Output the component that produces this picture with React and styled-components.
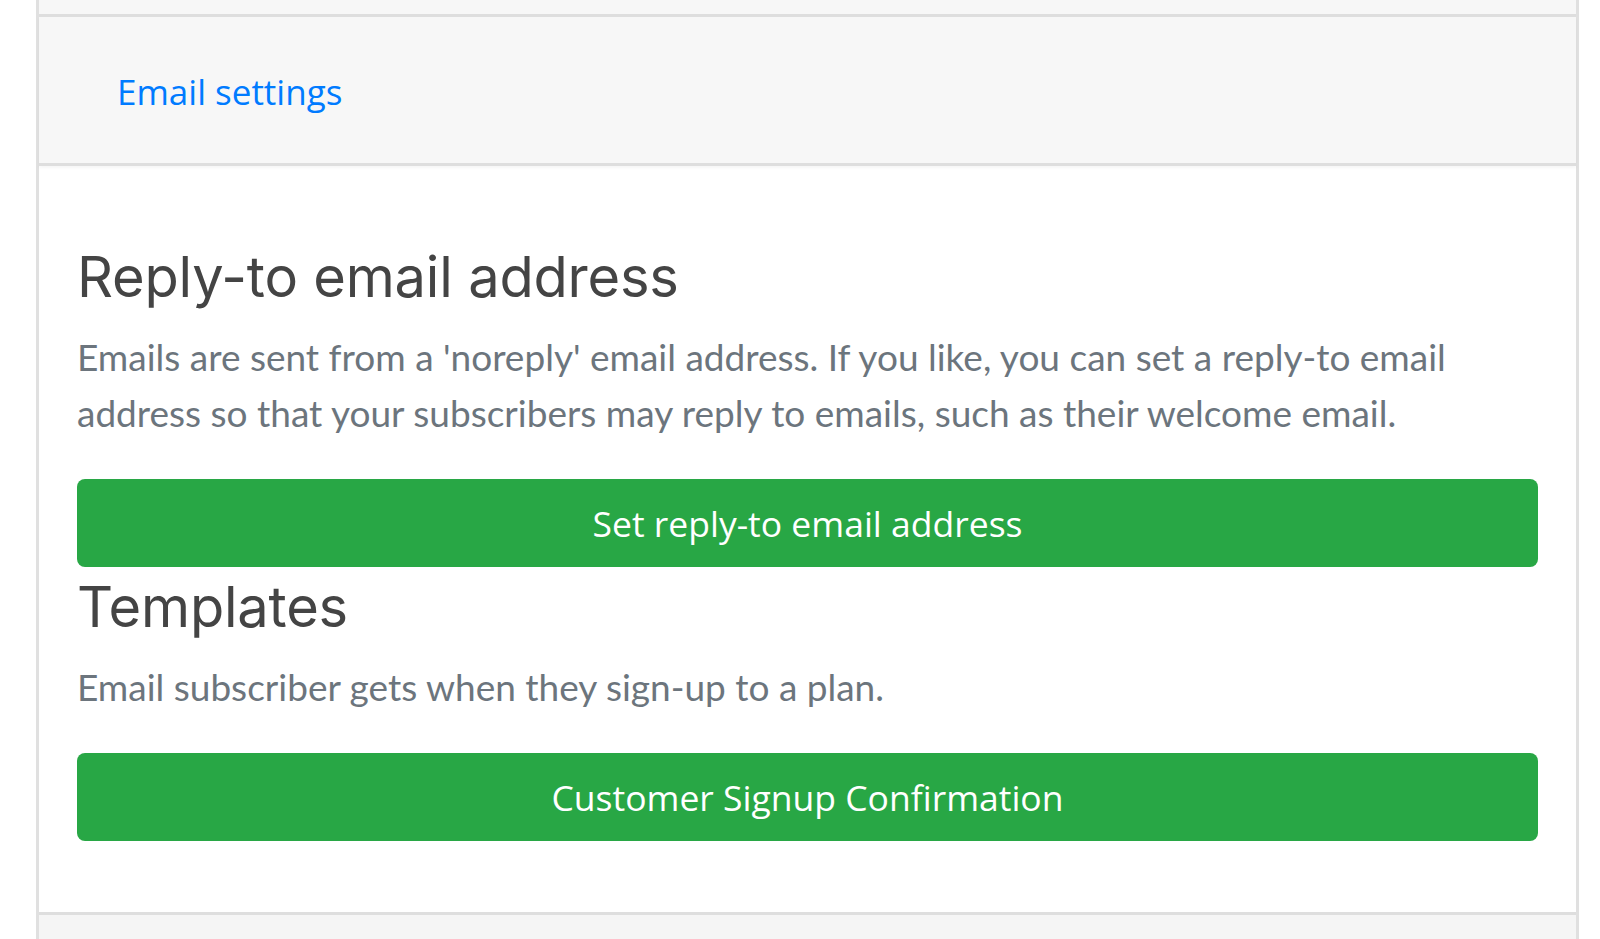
import React from 'react';
import styled, { createGlobalStyle } from 'styled-components';

const GlobalStyle = createGlobalStyle`
	body {
		margin: 0;
		background-color: #fff;
		font-family: 'Lato', sans-serif;
	}
`;

const Page = styled.div`
	width: 1600px;
	height: 939px;
	overflow: hidden;
	background-color: #fff;
`;

const Card = styled.div`
	margin-left: 36px;
	width: 1543px;
	box-sizing: border-box;
	border-left: 3px solid #e0e0e0;
	border-right: 3px solid #e0e0e0;
	display: flex;
	flex-direction: column;
`;

const TopStrip = styled.div`
	height: 14px;
	background-color: #f7f7f7;
	border-bottom: 3px solid #dedede;
`;

const Header = styled.div`
	height: 146px;
	background-color: #f7f7f7;
	border-bottom: 3px solid #dedede;
	display: flex;
	align-items: center;
	padding-left: 78px;
	box-shadow: 0 2px 3px rgba(0, 0, 0, 0.04);
`;

const HeaderLink = styled.a`
	font-family: 'Open Sans', 'Noto Sans', sans-serif;
	font-size: 35px;
	color: #007bff;
	text-decoration: none;
	margin-top: 3px;
	cursor: pointer;
`;

const Body = styled.div`
	padding: 78px 38px 71px 38px;
	display: flex;
	flex-direction: column;
`;

const Title = styled.h2`
	margin: ${(p) => (p.$first ? '0' : '7px')} 0 0 0;
	font-family: 'Inter', sans-serif;
	font-weight: 400;
	font-size: 56px;
	line-height: 1.2;
	letter-spacing: -0.2px;
	color: #444;
`;

const Text = styled.p`
	margin: ${(p) => p.$top}px 0 0 0;
	font-family: 'Lato', sans-serif;
	font-size: 37px;
	line-height: 56px;
	color: #6c757d;
`;

const Button = styled.button`
	margin-top: ${(p) => p.$top}px;
	width: 100%;
	height: 88px;
	border: none;
	border-radius: 8px;
	background-color: #28a745;
	color: #fff;
	font-family: 'Open Sans', 'Noto Sans', sans-serif;
	font-size: 35.5px;
	cursor: pointer;
`;

const Footer = styled.div`
	height: 40px;
	background-color: #f5f5f5;
	border-top: 3px solid #dedede;
`;

const App = () => {
	return (
		<Page>
			<GlobalStyle />
			<Card>
				<TopStrip />
				<Header>
					<HeaderLink>Email settings</HeaderLink>
				</Header>
				<Body>
					<Title $first>Reply-to email address</Title>
					<Text $top={18}>
						Emails are sent from a 'noreply' email address. If you like, you can set a reply-to email
						address so that your subscribers may reply to emails, such as their welcome email.
					</Text>
					<Button $top={38}>Set reply-to email address</Button>
					<Title>Templates</Title>
					<Text $top={18}>Email subscriber gets when they sign-up to a plan.</Text>
					<Button $top={38}>Customer Signup Confirmation</Button>
				</Body>
				<Footer />
			</Card>
		</Page>
	);
};

export default App;
